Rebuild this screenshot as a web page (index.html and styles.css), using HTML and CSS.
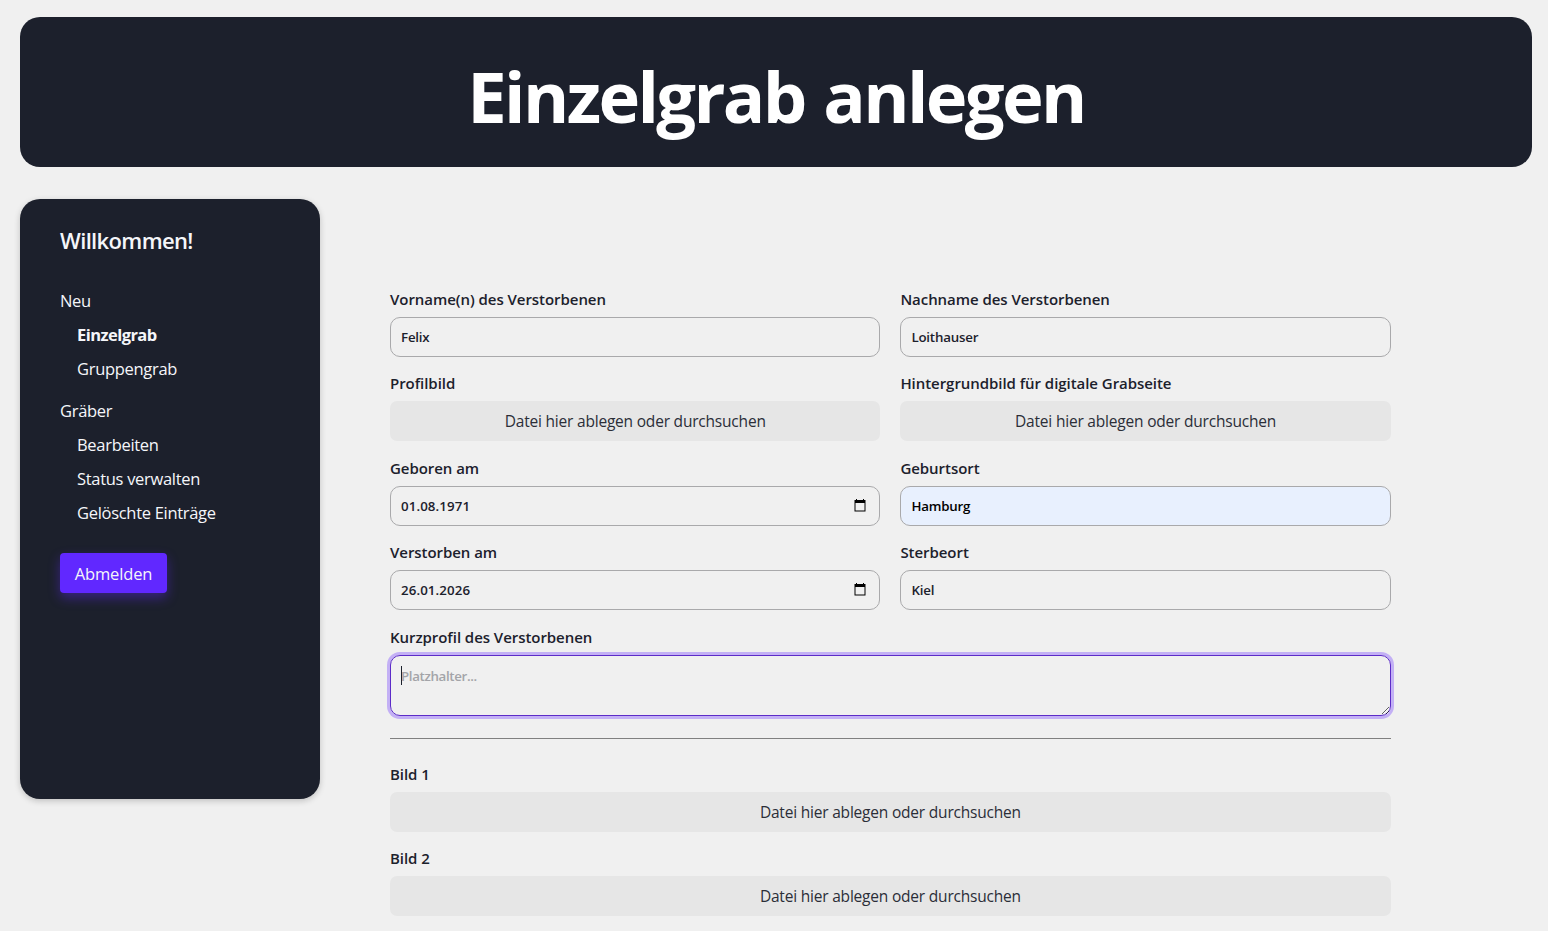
FILE: index.html
```
<!DOCTYPE html>
<html lang="de">
<head>
  <meta charset="UTF-8">
  <title>Einzelgrab anlegen</title>
  <link rel="stylesheet" href="styles.css">
</head>
<body>
  <header class="header">
    <h1>Einzelgrab anlegen</h1>
  </header>

  <div class="container">
    <nav class="sidebar">
      <h2>Willkommen!</h2>
      <ul>
        <li>Neu
          <ul>
            <li><a href="#" class="active">Einzelgrab</a></li>
            <li><a href="#">Gruppengrab</a></li>
          </ul>
        </li>
        <li>Gräber
          <ul>
            <li><a href="#">Bearbeiten</a></li>
            <li><a href="#">Status verwalten</a></li>
            <li><a href="#">Gelöschte Einträge</a></li>
          </ul>
        </li>
      </ul>
      <button class="logout">Abmelden</button>
    </nav>

    <form class="grave-form">
      <div class="field">
        <label for="vorname">Vorname(n) des Verstorbenen</label>
        <input type="text" id="vorname" value="Felix">
      </div>
      <div class="field">
        <label for="nachname">Nachname des Verstorbenen</label>
        <input type="text" id="nachname" value="Loithauser">
      </div>
      <div class="field">
        <label>Profilbild</label>
        <div class="dropzone">Datei hier ablegen oder durchsuchen</div>
      </div>
      <div class="field">
        <label>Hintergrundbild für digitale Grabseite</label>
        <div class="dropzone">Datei hier ablegen oder durchsuchen</div>
      </div>
      <div class="field">
        <label>Geboren am</label>
        <div class="date-input">
          <span>01.08.1971</span>
          <svg width="12" height="13" viewBox="0 0 12 13"><path d="M2 0h1v1h6V0h1v1h1.5v11.5H.5V1H2zM1.5 4v7.5h9V4z" fill-rule="evenodd"/></svg>
        </div>
      </div>
      <div class="field">
        <label for="geburtsort">Geburtsort</label>
        <input type="text" id="geburtsort" class="autofilled" value="Hamburg">
      </div>
      <div class="field">
        <label>Verstorben am</label>
        <div class="date-input">
          <span>26.01.2026</span>
          <svg width="12" height="13" viewBox="0 0 12 13"><path d="M2 0h1v1h6V0h1v1h1.5v11.5H.5V1H2zM1.5 4v7.5h9V4z" fill-rule="evenodd"/></svg>
        </div>
      </div>
      <div class="field">
        <label for="sterbeort">Sterbeort</label>
        <input type="text" id="sterbeort" value="Kiel">
      </div>
      <div class="field wide">
        <label for="kurzprofil">Kurzprofil des Verstorbenen</label>
        <div class="textarea-wrap">
          <textarea id="kurzprofil" placeholder="Platzhalter..."></textarea>
          <span class="caret"></span>
        </div>
      </div>
      <hr>
      <div class="field wide">
        <label>Bild 1</label>
        <div class="dropzone">Datei hier ablegen oder durchsuchen</div>
      </div>
      <div class="field wide">
        <label>Bild 2</label>
        <div class="dropzone">Datei hier ablegen oder durchsuchen</div>
      </div>
    </form>
  </div>
</body>
</html>
```
FILE: styles.css
```
* {
  box-sizing: border-box;
}

body {
  margin: 0;
  height: 931px;
  padding: 17px 16px 0 20px;
  overflow: hidden;
  background-color: #f0f0f0;
  color: #1c212c;
  font-family: "Segoe UI", "Open Sans", sans-serif;
  font-size: 16px;
}

.header {
  height: 150px;
  padding-top: 33px;
  border-radius: 20px;
  background-color: #1c202c;
  color: #fff;
  text-align: center;
}

h1 {
  margin: 0;
  font-size: 70.5px;
  line-height: 92px;
  font-weight: 700;
  letter-spacing: -2.65px;
  word-spacing: 3px;
}

.container {
  display: flex;
  align-items: flex-start;
  margin-top: 32px;
}

.sidebar {
  width: 300px;
  height: 600px;
  padding: 25px 40px;
  border-radius: 20px;
  background-color: #1c202c;
  color: #f5f6fa;
  box-shadow: 0 2px 6px rgba(0, 0, 0, 0.2);
}

.sidebar h2 {
  margin: 0 0 28px;
  font-size: 22px;
  line-height: 32px;
  font-weight: 600;
  letter-spacing: -0.65px;
}

.sidebar ul {
  margin: 0;
  padding: 0;
  list-style: none;
  font-size: 16.5px;
  line-height: 34px;
  letter-spacing: -0.3px;
}

.sidebar ul ul {
  padding-left: 17px;
  margin-bottom: 8px;
}

.sidebar a {
  color: inherit;
  text-decoration: none;
}

.sidebar a.active {
  font-weight: 700;
  letter-spacing: -0.55px;
}

.logout {
  width: 107px;
  height: 40px;
  margin-top: 15px;
  padding: 0;
  border: none;
  border-radius: 4px;
  background-color: #6128ff;
  color: #f5f6fa;
  font-family: inherit;
  font-size: 16.5px;
  letter-spacing: -0.15px;
  box-shadow: 0 5px 12px rgba(97, 40, 255, 0.4);
}

.grave-form {
  display: grid;
  grid-template-columns: 1fr 1fr;
  gap: 14.4px 20px;
  width: 1000.8px;
  margin: 88px 0 0 70px;
}

.wide {
  grid-column: 1 / -1;
}

label {
  display: block;
  margin-bottom: 6px;
  font-size: 15px;
  line-height: 24px;
  font-weight: 600;
  letter-spacing: -0.05px;
}

input,
textarea,
.date-input {
  display: block;
  width: 100%;
  height: 40px;
  padding: 0 10px;
  border: 1px solid #a9a9ab;
  border-radius: 10px;
  background-color: transparent;
  color: #1c212c;
  font-family: inherit;
  font-size: 13.3px;
  font-weight: 600;
  letter-spacing: -0.2px;
}

.autofilled {
  background-color: #e8f0fe;
  color: #000;
}

.date-input {
  display: flex;
  align-items: center;
  justify-content: space-between;
  padding: 0 13px 0 10px;
  letter-spacing: 0.1px;
}

.date-input svg {
  margin-bottom: 1px;
  fill: #000;
}

.dropzone {
  height: 40px;
  border-radius: 7px;
  background-color: #e6e6e6;
  font-size: 15.5px;
  line-height: 40px;
  letter-spacing: -0.2px;
  text-align: center;
  color: #2b2e38;
}

.textarea-wrap {
  position: relative;
}

textarea {
  height: 61px;
  padding: 10px;
  border-color: #5c2bc8;
  line-height: 20px;
  letter-spacing: -0.35px;
  outline: none;
  box-shadow: 0 0 0 3px #c3b0f5;
}

textarea::placeholder {
  color: #a3a4a8;
}

.caret {
  position: absolute;
  left: 11px;
  top: 11px;
  width: 1px;
  height: 19px;
  background-color: #1c212c;
}

hr {
  grid-column: 1 / -1;
  width: 100%;
  height: 1px;
  margin: 8px 0 8.6px;
  border: none;
  background-color: #808080;
}
```
